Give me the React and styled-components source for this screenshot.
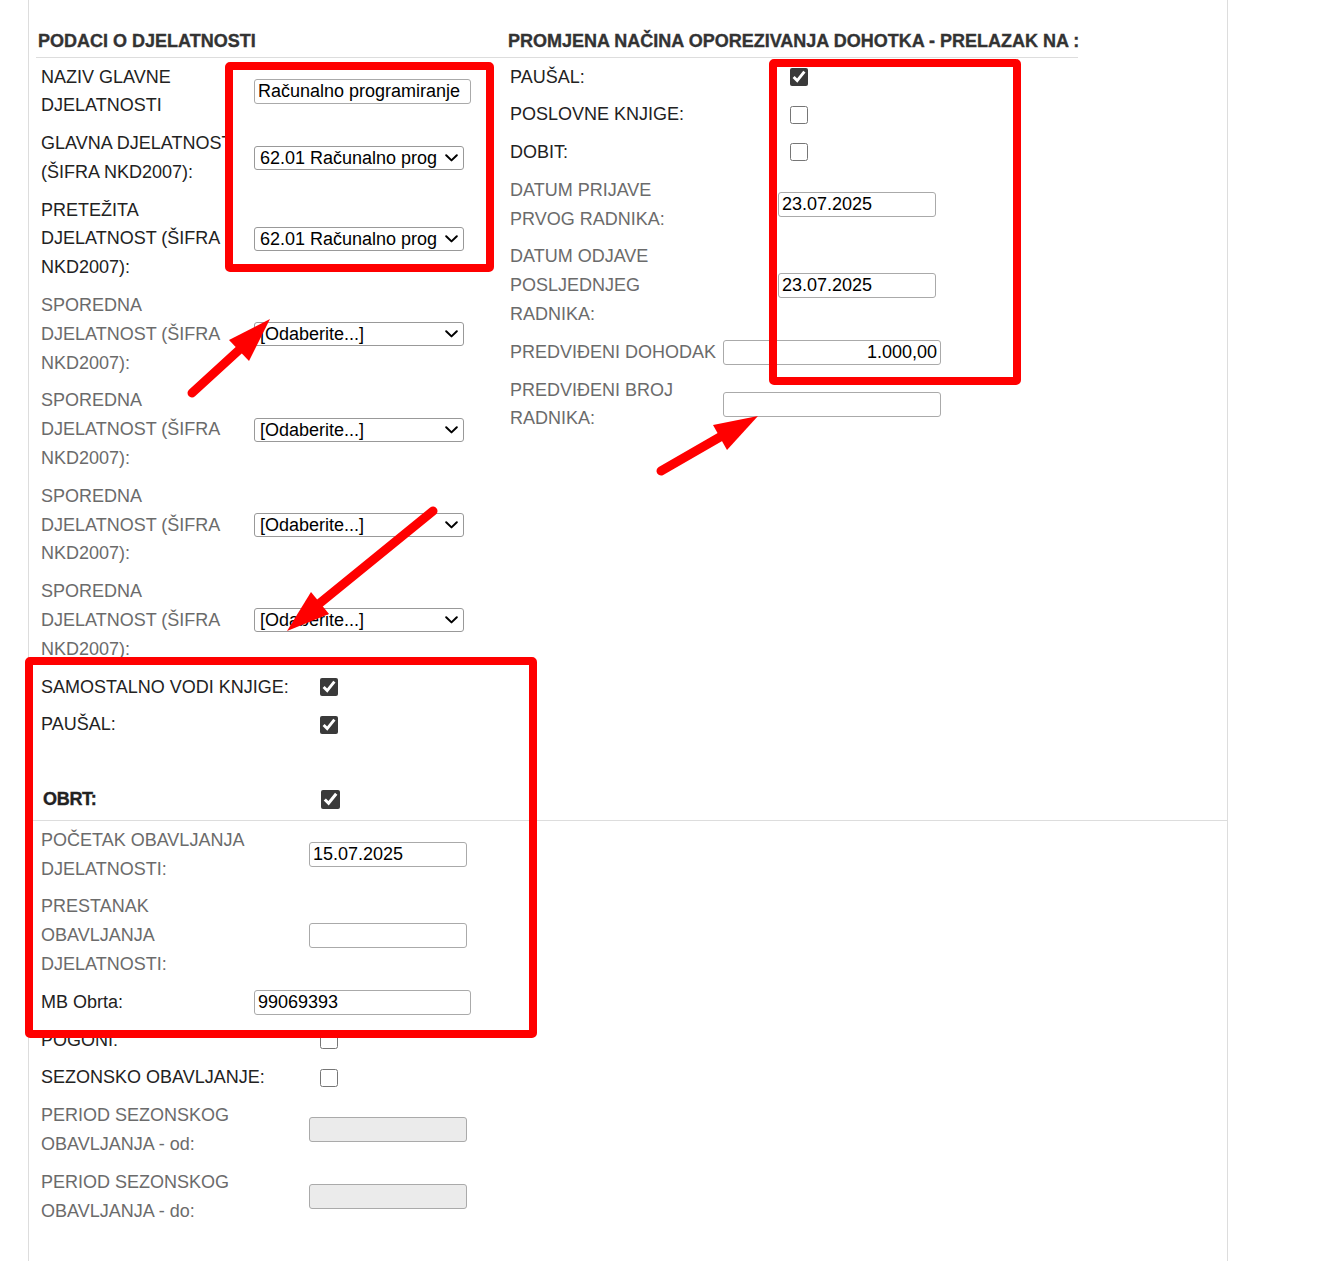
import styled, { createGlobalStyle } from 'styled-components';

const GlobalStyle = createGlobalStyle`
  html, body {
    margin: 0;
    padding: 0;
    background: #fff;
  }
  body {
    font-family: "Liberation Sans", Arial, sans-serif;
    font-size: 18px;
    color: #222;
  }
`;

const Page = styled.div`
  position: relative;
  min-height: 1261px;
`;

const Panel = styled.div`
  margin-left: 28px;
  width: 1200px;
  box-sizing: border-box;
  min-height: 1261px;
  padding: 26px 0 0 7px;
  border-left: 1px solid #ddd;
  border-right: 1px solid #ddd;
`;

const Columns = styled.div`
  display: flex;
  align-items: flex-start;
`;

const Section = styled.div`
  width: ${p => p.$width}px;
  flex: none;
`;

const Title = styled.div`
  font-weight: bold;
  font-size: 18px;
  line-height: 29px;
  color: #333;
  -webkit-text-stroke: 0.35px #333;
  padding: 1px 0 1px ${p => p.$indent || 2}px;
  border-bottom: 1px solid #ddd;
  white-space: nowrap;
`;

const Row = styled.div`
  display: grid;
  grid-template-columns: ${p => p.$label || 213}px 1fr;
  align-items: center;
  padding: 4.5px 0 4.5px 5px;
`;

const Label = styled.div`
  line-height: 28.8px;
  white-space: nowrap;
  color: ${p => (p.$muted ? '#6b6b6b' : '#222')};
`;

const Field = styled.div`
  position: relative;
  display: flex;
  align-items: center;
`;

const TextInput = styled.input`
  box-sizing: border-box;
  width: ${p => p.$width || 158}px;
  height: 25px;
  padding: 0 3px;
  font: 18px "Liberation Sans", Arial, sans-serif;
  color: #000;
  text-align: ${p => (p.$right ? 'right' : 'left')};
  background: ${p => (p.disabled ? '#ebebeb' : '#fff')};
  border: 1px solid #aaa;
  border-radius: 3px;
  outline: none;
`;

const Select = styled.select`
  appearance: none;
  -webkit-appearance: none;
  box-sizing: border-box;
  width: 210px;
  height: 24px;
  padding: 0 26px 0 5px;
  font: 18px "Liberation Sans", Arial, sans-serif;
  color: #000;
  background: #fff;
  border: 1px solid #999;
  border-radius: 3px;
  outline: none;
`;

const Chevron = styled.svg`
  position: absolute;
  left: 191px;
  top: 50%;
  margin-top: -4px;
  pointer-events: none;
`;

const Check = styled.input.attrs({ type: 'checkbox' })`
  width: ${p => p.$size || 18}px;
  height: ${p => p.$size || 18}px;
  margin: 0 0 0 ${p => p.$offset ?? 11}px;
  accent-color: #3a3a3a;
`;

const ObrtRow = styled.div`
  display: grid;
  grid-template-columns: 278px 1fr;
  align-items: center;
  margin: 41px 0 0 -7px;
  padding: 0 0 6.5px 14px;
  border-bottom: 1px solid #ddd;
`;

const ObrtTitle = styled.div`
  font-weight: bold;
  line-height: 29px;
  color: #222;
  letter-spacing: -0.3px;
  -webkit-text-stroke: 0.35px #222;
`;

const Bottom = styled.div`
  width: 469px;
`;

const Overlay = styled.div`
  position: absolute;
  left: ${p => p.$x}px;
  top: ${p => p.$y}px;
  width: ${p => p.$w}px;
  height: ${p => p.$h}px;
  box-sizing: border-box;
  border: 8px solid #ff0000;
  border-radius: 5px;
  pointer-events: none;
`;

const Arrows = styled.svg`
  position: absolute;
  left: 0;
  top: 0;
  pointer-events: none;
`;

const Arrow = ({ tail, base, tip, a, b }) => (
  <g>
    <line x1={tail[0]} y1={tail[1]} x2={base[0]} y2={base[1]} stroke="#ff0000" strokeWidth="9" strokeLinecap="round" />
    <polygon points={`${tip.join(',')} ${a.join(',')} ${b.join(',')}`} fill="#ff0000" />
  </g>
);

const Dropdown = ({ value, text }) => (
  <Field>
    <Select defaultValue={value}>
      <option value={value}>{text}</option>
    </Select>
    <Chevron width="13" height="8" viewBox="0 0 13 8">
      <path d="M1.2 1.2 L6.5 6.4 L11.8 1.2" fill="none" stroke="#000" strokeWidth="2" strokeLinecap="round" strokeLinejoin="round" />
    </Chevron>
  </Field>
);

const sporedna = [1, 2, 3, 4];

export default function App() {
  return (
    <Page>
      <GlobalStyle />
      <Panel>
        <Columns>
          <Section $width={469}>
            <Title>PODACI O DJELATNOSTI</Title>
            <Row>
              <Label>NAZIV GLAVNE<br />DJELATNOSTI</Label>
              <Field><TextInput $width={217} defaultValue="Računalno programiranje" /></Field>
            </Row>
            <Row>
              <Label>GLAVNA DJELATNOST<br />(ŠIFRA NKD2007):</Label>
              <Dropdown value="6201" text="62.01 Računalno programiranje" />
            </Row>
            <Row>
              <Label>PRETEŽITA<br />DJELATNOST (ŠIFRA<br />NKD2007):</Label>
              <Dropdown value="6201" text="62.01 Računalno programiranje" />
            </Row>
            {sporedna.map(n => (
              <Row key={n}>
                <Label $muted>SPOREDNA<br />DJELATNOST (ŠIFRA<br />NKD2007):</Label>
                <Dropdown value="" text="[Odaberite...]" />
              </Row>
            ))}
            <Row $label={268}>
              <Label>SAMOSTALNO VODI KNJIGE:</Label>
              <Field><Check defaultChecked /></Field>
            </Row>
            <Row $label={268}>
              <Label>PAUŠAL:</Label>
              <Field><Check defaultChecked /></Field>
            </Row>
          </Section>

          <Section $width={573}>
            <Title $indent={3}>PROMJENA NAČINA OPOREZIVANJA DOHOTKA - PRELAZAK NA :</Title>
            <Row $label={268}>
              <Label>PAUŠAL:</Label>
              <Field><Check $offset={12} defaultChecked /></Field>
            </Row>
            <Row $label={268}>
              <Label>POSLOVNE KNJIGE:</Label>
              <Field><Check $offset={12} /></Field>
            </Row>
            <Row $label={268}>
              <Label>DOBIT:</Label>
              <Field><Check $offset={12} /></Field>
            </Row>
            <Row $label={268}>
              <Label $muted>DATUM PRIJAVE<br />PRVOG RADNIKA:</Label>
              <Field><TextInput defaultValue="23.07.2025" /></Field>
            </Row>
            <Row $label={268}>
              <Label $muted>DATUM ODJAVE<br />POSLJEDNJEG<br />RADNIKA:</Label>
              <Field><TextInput defaultValue="23.07.2025" /></Field>
            </Row>
            <Row>
              <Label $muted>PREDVIĐENI DOHODAK</Label>
              <Field><TextInput $width={218} $right defaultValue="1.000,00" /></Field>
            </Row>
            <Row>
              <Label $muted>PREDVIĐENI BROJ<br />RADNIKA:</Label>
              <Field><TextInput $width={218} defaultValue="" /></Field>
            </Row>
          </Section>
        </Columns>

        <ObrtRow>
          <ObrtTitle>OBRT:</ObrtTitle>
          <Field><Check $offset={0} $size={19} defaultChecked /></Field>
        </ObrtRow>

        <Bottom>
          <Row $label={268}>
            <Label $muted>POČETAK OBAVLJANJA<br />DJELATNOSTI:</Label>
            <Field><TextInput defaultValue="15.07.2025" /></Field>
          </Row>
          <Row $label={268}>
            <Label $muted>PRESTANAK<br />OBAVLJANJA<br />DJELATNOSTI:</Label>
            <Field><TextInput defaultValue="" /></Field>
          </Row>
          <Row>
            <Label>MB Obrta:</Label>
            <Field><TextInput $width={217} defaultValue="99069393" /></Field>
          </Row>
          <Row $label={268}>
            <Label>POGONI:</Label>
            <Field><Check /></Field>
          </Row>
          <Row $label={268}>
            <Label>SEZONSKO OBAVLJANJE:</Label>
            <Field><Check /></Field>
          </Row>
          <Row $label={268}>
            <Label $muted>PERIOD SEZONSKOG<br />OBAVLJANJA - od:</Label>
            <Field><TextInput disabled defaultValue="" /></Field>
          </Row>
          <Row $label={268}>
            <Label $muted>PERIOD SEZONSKOG<br />OBAVLJANJA - do:</Label>
            <Field><TextInput disabled defaultValue="" /></Field>
          </Row>
        </Bottom>
      </Panel>

      <Overlay $x={225} $y={62} $w={269} $h={210} />
      <Overlay $x={769} $y={59} $w={252} $h={326} />
      <Overlay $x={25} $y={657} $w={512} $h={381} />

      <Arrows width="1331" height="1261" viewBox="0 0 1331 1261">
        <Arrow tail={[192, 393]} base={[239, 350]} tip={[270, 319]} a={[229, 340]} b={[249, 361]} />
        <Arrow tail={[661, 471]} base={[720, 437]} tip={[758, 416]} a={[713, 425]} b={[727, 450]} />
        <Arrow tail={[433, 511]} base={[320, 603]} tip={[287, 631]} a={[311, 592]} b={[329, 614]} />
      </Arrows>
    </Page>
  );
}
